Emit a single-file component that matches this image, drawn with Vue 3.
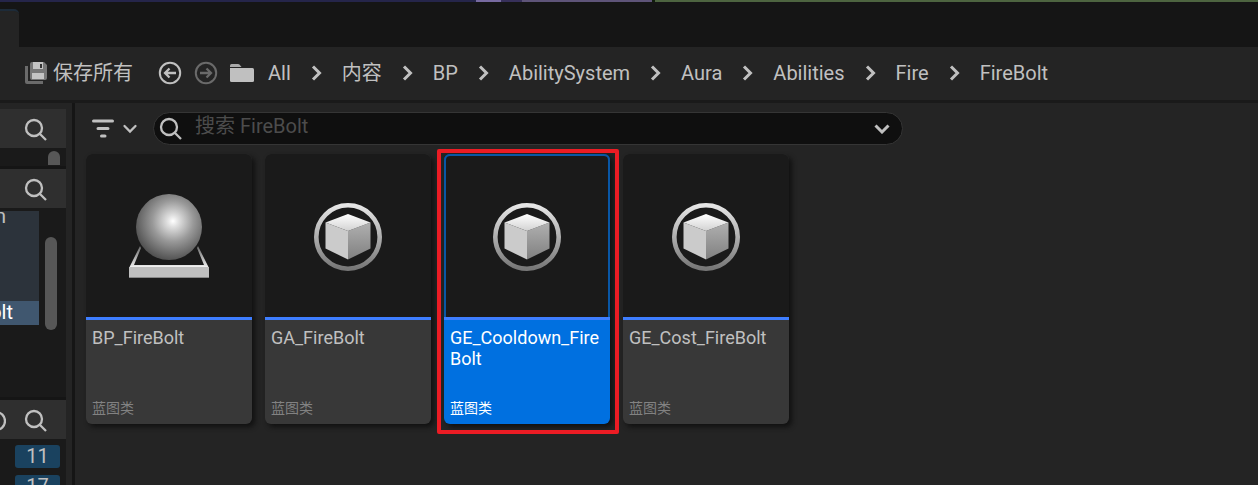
<script setup>
import { ref } from 'vue'

const path = ['All', '内容', 'BP', 'AbilitySystem', 'Aura', 'Abilities', 'Fire', 'FireBolt']
const assets = [
  { name: 'BP_FireBolt', icon: 'sphere' },
  { name: 'GA_FireBolt', icon: 'cube' },
  { name: 'GE_Cooldown_FireBolt', icon: 'cube' },
  { name: 'GE_Cost_FireBolt', icon: 'cube' },
]
const selected = ref('GE_Cooldown_FireBolt')
const query = ref('')
const counts = [11, 17]
</script>

<template>
  <div class="window">
    <div class="viewport-edge"></div>
    <div class="tabs"><div class="tab"></div></div>

    <header class="toolbar">
      <button class="save" type="button">
        <svg width="22" height="22" viewBox="0 0 22 22" aria-hidden="true">
          <path d="M0 4h3v15h15v3H2q-2 0-2-2z" fill="#6b6b6b" />
          <path d="M5 2q0-2 2-2h12l3 3v13q0 2-2 2H7q-2 0-2-2z" fill="#777" />
          <path d="M8 0h10v7H8z" fill="#c4c4c4" />
          <path d="M15 2h2v4h-2z" fill="#333" />
          <path d="M7 11h12v6H7z" fill="#c4c4c4" />
        </svg>
        <span>保存所有</span>
      </button>
      <button class="nav" type="button" aria-label="Back">
        <svg width="24" height="24" viewBox="0 0 24 24" fill="none" stroke="currentColor" stroke-width="2">
          <circle cx="12" cy="12" r="10.2" />
          <path d="M18 12H7.500M11.500 7.500L7 12l4.500 4.500" stroke-width="2.300" />
        </svg>
      </button>
      <button class="nav dim" type="button" aria-label="Forward">
        <svg width="24" height="24" viewBox="0 0 24 24" fill="none" stroke="currentColor" stroke-width="2">
          <circle cx="12" cy="12" r="10.2" />
          <path d="M6 12h10.500M12.500 7.500L17 12l-4.500 4.500" stroke-width="2.300" />
        </svg>
      </button>
      <svg class="folder" width="24" height="18" viewBox="0 0 24 18" aria-hidden="true">
        <path d="M0 3V1.500Q0 0 1.500 0H8q1 0 1.700.8L11.500 3z" fill="#aaa" />
        <path d="M0 4h22.500Q24 4 24 5.500v11q0 1.500-1.500 1.500h-21Q0 18 0 16.500z" fill="#c0c0c0" />
      </svg>
      <nav class="crumbs" aria-label="Path">
        <template v-for="(part, i) in path" :key="part">
          <svg v-if="i" width="11" height="16" viewBox="0 0 11 16" aria-hidden="true">
            <path d="M2 1.500L8.500 8 2 14.500" fill="none" stroke="#c0c0c0" stroke-width="3" />
          </svg>
          <a href="#">{{ part }}</a>
        </template>
      </nav>
    </header>

    <div class="body">
      <aside class="sidebar">
        <div class="pane-head">
          <button type="button" aria-label="Search favorites">
            <svg width="24" height="24" viewBox="0 0 24 24"><circle cx="10" cy="10" r="8" /><path d="M15.500 15.500L22 22" /></svg>
          </button>
        </div>
        <div class="favorites"><i class="thumb-end"></i></div>
        <div class="pane-head split">
          <button type="button" aria-label="Search sources">
            <svg width="24" height="24" viewBox="0 0 24 24"><circle cx="10" cy="10" r="8" /><path d="M15.500 15.500L22 22" /></svg>
          </button>
        </div>
        <div class="sources">
          <div class="tree">
            <div class="branch"><span>AbilitySystem</span></div>
            <div class="leaf"><span>FireBolt</span></div>
          </div>
          <i class="thumb"></i>
        </div>
        <div class="pane-head split">
          <svg class="add" width="20" height="20" viewBox="0 0 20 20" aria-hidden="true"><circle cx="10" cy="10" r="9" /></svg>
          <button type="button" aria-label="Search collections">
            <svg width="24" height="24" viewBox="0 0 24 24"><circle cx="10" cy="10" r="8" /><path d="M15.500 15.500L22 22" /></svg>
          </button>
        </div>
        <div class="collections">
          <span v-for="n in counts" :key="n" class="count">{{ n }}</span>
        </div>
      </aside>

      <main class="content">
        <div class="filters">
          <button class="filter" type="button" aria-label="Filters">
            <svg width="46" height="20" viewBox="0 0 46 20" fill="none" stroke="#c0c0c0" stroke-linecap="round">
              <path d="M1.500 2h19M6 9.500h10M9.500 17h3.500" stroke-width="3" />
              <path d="M32.500 7l5.500 5.500L43.500 7" stroke-width="2.300" />
            </svg>
          </button>
          <label class="search">
            <svg class="glass" width="24" height="24" viewBox="0 0 24 24" aria-hidden="true"><circle cx="10" cy="10" r="8" /><path d="M15.500 15.500L22 22" /></svg>
            <input v-model="query" type="text" placeholder="搜索 FireBolt" aria-label="搜索 FireBolt" />
            <svg width="16" height="10" viewBox="0 0 16 10" aria-hidden="true">
              <path d="M1.500 1.500L8 8l6.500-6.500" fill="none" stroke="#c0c0c0" stroke-width="3" />
            </svg>
          </label>
        </div>

        <div class="grid">
          <div v-for="a in assets" :key="a.name" class="slot">
            <button class="card" :class="{ selected: selected === a.name }" type="button" @click="selected = a.name">
              <span class="preview">
                <svg v-if="a.icon === 'sphere'" class="sphere" width="80" height="84" viewBox="0 0 80 84" aria-hidden="true">
                  <defs>
                    <radialGradient id="ball" cx="0.56" cy="0.41" r="0.62">
                      <stop offset="0" stop-color="#fff" />
                      <stop offset="0.15" stop-color="#dedede" />
                      <stop offset="0.5" stop-color="#999" />
                      <stop offset="1" stop-color="#4c4c4c" />
                    </radialGradient>
                    <linearGradient id="stand" x1="0" y1="0" x2="0" y2="1">
                      <stop offset="0" stop-color="#666" />
                      <stop offset="1" stop-color="#f4f4f4" />
                    </linearGradient>
                  </defs>
                  <path d="M11 52L0 74h80L69 52l-1 2 7 17H5l7-17z" fill="url(#stand)" />
                  <path d="M0 73h80v10H0z" fill="#bfbfbf" />
                  <path d="M0 83h80v1H0z" fill="#888" />
                  <path d="M1 72h78v1H1z" fill="#eee" />
                  <circle cx="40" cy="33" r="33" fill="url(#ball)" />
                </svg>
                <svg v-else class="cube" width="68" height="68" viewBox="0 0 68 68" aria-hidden="true">
                  <defs>
                    <linearGradient id="ring" x1="0" y1="0" x2="0" y2="1">
                      <stop offset="0" stop-color="#e6e6e6" />
                      <stop offset="1" stop-color="#777" />
                    </linearGradient>
                    <linearGradient id="top" x1="0" y1="0" x2="0" y2="1">
                      <stop offset="0" stop-color="#fff" />
                      <stop offset="1" stop-color="#d2d2d2" />
                    </linearGradient>
                    <linearGradient id="side" x1="0" y1="0" x2="0" y2="1">
                      <stop offset="0" stop-color="#b0b0b0" />
                      <stop offset="1" stop-color="#808080" />
                    </linearGradient>
                  </defs>
                  <circle cx="34" cy="34" r="31.700" fill="none" stroke="url(#ring)" stroke-width="4.600" />
                  <path d="M11.500 19.500L34 28v28.500l-22.500-11z" fill="#cbcbcb" />
                  <path d="M56.500 19.500L34 28v28.500l22.500-11z" fill="url(#side)" />
                  <path d="M34 11l22.500 8.500L34 28l-22.500-8.500z" fill="url(#top)" />
                </svg>
              </span>
              <span class="info">
                <span class="name">{{ a.name }}</span>
                <span class="kind">蓝图类</span>
              </span>
            </button>
            <i v-if="selected === a.name" class="marker"></i>
          </div>
        </div>
      </main>
    </div>
  </div>
</template>

<style>
body { background: #242424; }
</style>

<style scoped>
* { box-sizing: border-box; }
.window {
  height: 100vh;
  display: flex;
  flex-direction: column;
  overflow: hidden;
  background: #242424;
  color: #c0c0c0;
  font-family: Roboto, "Noto Sans CJK SC", sans-serif;
  font-size: 20px;
  line-height: 24px;
}
button { border: 0; padding: 0; background: none; color: inherit; font: inherit; text-align: left; cursor: pointer; }
svg { display: block; flex: none; }

.viewport-edge {
  flex: none;
  height: 2px;
  background: linear-gradient(90deg, #25254a 0 37.800%, #776aa0 37.800% 39.800%, #37305a 39.800% 41.500%, #5e5478 41.500% 51.800%, #111c0c 51.800% 52.100%, #4d6440 52.100%);
}
.tabs { flex: none; height: 45px; padding-top: 7px; background: #151515; }
.tab { width: 19px; height: 38px; background: #242424; border-top: 2px solid #1d2b39; border-radius: 0 5px 0 0; }

.toolbar {
  flex: none;
  height: 56px;
  display: flex;
  align-items: center;
  padding: 0 0 2px 25px;
  border-bottom: 3px solid #1a1a1a;
}
.save { display: flex; align-items: center; gap: 6px; margin-right: 25px; white-space: nowrap; }
.nav { margin-right: 12px; }
.nav.dim { color: #6a6a6a; }
.crumbs { display: flex; align-items: center; gap: 20px; margin-left: 14px; white-space: nowrap; }
.crumbs a { color: inherit; text-decoration: none; }

.body { flex: 1; min-height: 0; display: flex; }
.sidebar {
  flex: none;
  width: 75px;
  display: flex;
  flex-direction: column;
  padding: 6px 6px 0 0;
  border-right: 3px solid #151515;
  overflow: hidden;
}
.pane-head {
  flex: none;
  height: 39px;
  display: flex;
  align-items: center;
  justify-content: flex-end;
  gap: 18px;
  padding: 3px 18px 0 0;
  background: #2f2f2f;
}
.pane-head.split { height: 42px; border-top: 3px solid #151515; }
.pane-head svg, .glass { fill: none; stroke: #c0c0c0; stroke-width: 2.3; }
.favorites, .sources, .collections { flex: none; background: #1a1a1a; }
.favorites { height: 18px; display: flex; justify-content: flex-end; padding: 3px 6px 1px 0; }
.thumb-end { width: 12px; background: #575757; border-radius: 6px 6px 0 0; }
.sources { height: 189px; display: flex; align-items: flex-start; gap: 6px; padding-top: 3px; }
.tree { width: 39px; overflow: hidden; }
.branch, .leaf { display: flex; justify-content: flex-end; }
.branch { height: 90px; padding-right: 33px; background: #2c333b; line-height: 10px; }
.leaf { height: 24px; padding-right: 26px; background: #40576f; color: #fff; line-height: 22px; }
.thumb { width: 12px; height: 93px; margin-top: 26px; background: #575757; border-radius: 6px; }
.collections { flex: 1; display: flex; flex-direction: column; align-items: flex-end; gap: 7px; padding: 6px 6px 0 0; }
.count { flex: none; width: 45px; height: 23px; background: #1a425f; border-radius: 3px; text-align: center; line-height: 23px; }

.content { flex: 1; min-width: 0; }
.filters { display: flex; align-items: center; gap: 15px; padding: 9px 16px 0 17px; }
.search {
  flex: 0 1 750px;
  height: 33px;
  display: flex;
  align-items: center;
  gap: 12px;
  padding: 0 12px 0 5px;
  background: #0f0f0f;
  border: 1px solid #353535;
  border-radius: 17px;
}
.search input {
  flex: 1;
  min-width: 0;
  height: 28px;
  padding: 0 0 6px;
  border: 0;
  outline: 0;
  background: none;
  color: #c0c0c0;
  font: inherit;
}
.search input::placeholder { color: #4c4c4c; opacity: 1; }

.grid { display: grid; grid-template-columns: repeat(auto-fill, 166px); gap: 13px; padding: 9px 11px; }
.slot { position: relative; }
.card {
  width: 100%;
  display: flex;
  flex-direction: column;
  border-radius: 6px;
  overflow: hidden;
  background: #383838;
  box-shadow: 3px 3px 5px #111;
}
.preview {
  width: 100%;
  height: 166px;
  display: flex;
  justify-content: center;
  background: #1a1a1a;
  border-bottom: 3px solid #3e7eff;
}
.sphere { margin-top: 40px; }
.cube { margin-top: 49px; }
.info { width: 100%; height: 104px; display: flex; flex-direction: column; justify-content: space-between; padding: 7px 6px 6px; }
.name { font-size: 18px; line-height: 21px; overflow-wrap: anywhere; }
.kind { font-size: 14px; line-height: 20px; color: #828282; }
.selected { background: #0070e0; color: #fff; }
.selected .kind { color: #fff; }
.selected .preview {
  border-radius: 6px 6px 0 0;
  box-shadow: inset 2px 0 #0957a6, inset -2px 0 #0957a6, inset 0 2px #0957a6;
}
.marker {
  position: absolute;
  inset: -5px -9px -10px -7px;
  border: 4px solid #ec1c24;
  border-radius: 2px;
  pointer-events: none;
}
</style>
